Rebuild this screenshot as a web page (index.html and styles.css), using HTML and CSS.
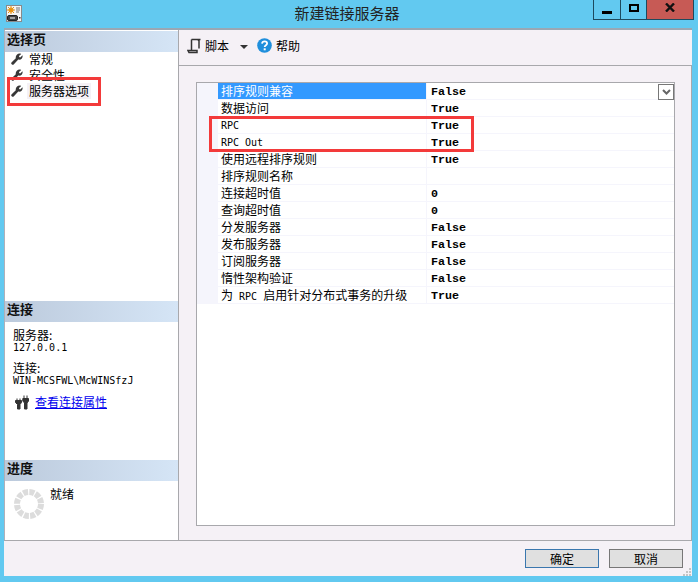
FILE: index.html
```html
<!DOCTYPE html>
<html lang="zh">
<head>
<meta charset="utf-8">
<title>新建链接服务器</title>
<link rel="stylesheet" href="styles.css">
</head>
<body>
<svg class="defs" width="0" height="0" aria-hidden="true">
  <symbol id="wrench" viewBox="0 0 12 12">
    <path d="M.7 11.300c-.8-.8-.6-1.500 0-2.100L4.800 5.300C4.300 2.800 6.300.3 9.200.6c.5.100.8.200 1 .4L8 3.100l.2 1 1 .3L11.500 2.200c.7 2.700-1.500 5.100-4.200 4.400L2.900 11.300c-.7.700-1.400.8-2.200 0z" fill="#383838"/>
  </symbol>
</svg>
<div class="window">
  <header class="titlebar">
    <div class="appicon">
      <svg width="16" height="17" viewBox="0 0 16 17">
        <rect x=".5" y=".5" width="15" height="16" fill="#f4f4f4" stroke="#8a8a8a"/>
        <circle cx="5" cy="5" r="2.500" fill="#f0a020"/>
        <path d="M5 1v8M1 5h8M2 2l6 6M8 2l-6 6" stroke="#e89010" stroke-width="1"/>
        <path d="M10 3h4M10 5h4M10 7h3" stroke="#777"/>
        <rect x="1.500" y="10.500" width="10" height="5" rx="1.500" fill="#444" stroke="#222"/>
        <path d="M4 13h5" stroke="#fff"/>
        <rect x="13" y="12" width="1.500" height="1.500" fill="#333"/>
      </svg>
    </div>
    <h1 class="title">新建链接服务器</h1>
    <div class="controls">
      <button class="ctl ctl-min" type="button" aria-label="最小化"><span class="glyph-min"></span></button>
      <button class="ctl ctl-max" type="button" aria-label="最大化"><span class="glyph-max"></span></button>
      <button class="ctl ctl-close" type="button" aria-label="关闭">
        <svg width="10" height="9" viewBox="0 0 10 9"><path d="M1 .5l8 8M9 .5l-8 8" stroke="#111" stroke-width="2.400"/></svg>
      </button>
    </div>
  </header>

  <div class="main">
    <div class="body">
      <aside class="side">
        <h2 class="side-head">选择页</h2>
        <ul class="pages">
          <li class="page"><svg class="ico"><use href="#wrench"/></svg><span>常规</span></li>
          <li class="page"><svg class="ico"><use href="#wrench"/></svg><span>安全性</span></li>
          <li class="page"><svg class="ico"><use href="#wrench"/></svg><span class="page-sel">服务器选项</span></li>
        </ul>
        <h2 class="side-head">连接</h2>
        <div class="conn">
          <div class="conn-label">服务器:</div>
          <div class="mono conn-value">127.0.0.1</div>
          <div class="conn-label conn-gap">连接:</div>
          <div class="mono conn-value">WIN-MCSFWL\McWINSfzJ</div>
          <div class="conn-link">
            <svg width="15" height="15" viewBox="0 0 15 15">
              <path d="M3 3.500v2M6 3.500v2M1.500 5.500h6v2L6 9.500V14H3.500V9.500L1.500 7.500z" fill="#333" stroke="#333" stroke-width="1"/>
              <path d="M10 .5v3M13 .5v3M8.800 3.500h5.700v2.500L13 8v6h-2.500V8L8.800 6z" fill="#333" stroke="#333" stroke-width="1"/>
            </svg>
            <a href="#">查看连接属性</a>
          </div>
        </div>
        <h2 class="side-head">进度</h2>
        <div class="progress">
          <svg width="32" height="32" viewBox="0 0 32 32">
            <circle cx="16" cy="16" r="12" fill="none" stroke="#dcdcdc" stroke-width="6" stroke-dasharray="5 1.283"/>
          </svg>
          <span class="progress-text">就绪</span>
        </div>
      </aside>

      <section class="content">
        <div class="toolbar">
          <svg class="tool-ico" width="15" height="16" viewBox="0 0 15 16">
            <path d="M4.500 1.500h9M4.500 1.500v11M11.500 1.500v1.500M12 1.500v9M1 12.500h9v2H2z" fill="none" stroke="#333" stroke-width="1.500"/>
          </svg>
          <span class="tool-text">脚本</span>
          <span class="caret"></span>
          <svg class="help-ico" width="15" height="15" viewBox="0 0 15 15">
            <circle cx="7.500" cy="7.500" r="7.300" fill="#1f8fdc"/>
            <path d="M5 5.600c.2-1.500 1.200-2.200 2.600-2.200 1.500 0 2.500.9 2.500 2 0 1.900-2.400 1.800-2.400 3.700" fill="none" stroke="#fff" stroke-width="1.800"/>
            <rect x="6.700" y="10.300" width="2" height="2" fill="#fff"/>
          </svg>
          <span class="tool-text">帮助</span>
        </div>
        <div class="panel">
          <div class="grid">
            <div class="row row-sel"><span class="name">排序规则兼容</span><span class="val">False</span><span class="drop"><svg width="9" height="6" viewBox="0 0 9 6"><path d="M1 1l3.500 3.500L8 1" fill="none" stroke="#666" stroke-width="2"/></svg></span></div>
            <div class="row"><span class="name">数据访问</span><span class="val">True</span></div>
            <div class="row"><span class="name mono">RPC</span><span class="val">True</span></div>
            <div class="row"><span class="name mono">RPC Out</span><span class="val">True</span></div>
            <div class="row"><span class="name">使用远程排序规则</span><span class="val">True</span></div>
            <div class="row"><span class="name">排序规则名称</span><span class="val"></span></div>
            <div class="row"><span class="name">连接超时值</span><span class="val">0</span></div>
            <div class="row"><span class="name">查询超时值</span><span class="val">0</span></div>
            <div class="row"><span class="name">分发服务器</span><span class="val">False</span></div>
            <div class="row"><span class="name">发布服务器</span><span class="val">False</span></div>
            <div class="row"><span class="name">订阅服务器</span><span class="val">False</span></div>
            <div class="row"><span class="name">惰性架构验证</span><span class="val">False</span></div>
            <div class="row"><span class="name">为<span class="mono"> RPC </span>启用针对分布式事务的升级</span><span class="val">True</span></div>
          </div>
        </div>
      </section>
    </div>
    <footer class="footer">
      <button class="btn btn-default" type="button">确定</button>
      <button class="btn" type="button">取消</button>
      <svg class="grip" width="9" height="9" viewBox="0 0 9 9"><path d="M7 1h2v2H7zM4 4h2v2H4zM7 4h2v2H7zM1 7h2v2H1zM4 7h2v2H4zM7 7h2v2H7z" fill="#c4c4c4"/></svg>
    </footer>
  </div>
  <div class="mark mark-side"></div>
  <div class="mark mark-rows"></div>
</div>
</body>
</html>
```
FILE: styles.css
```css
* { box-sizing: border-box; }
html, body { margin: 0; padding: 0; }
body {
  width: 698px;
  height: 582px;
  overflow: hidden;
  font-family: "Noto Sans CJK SC", "Liberation Sans", sans-serif;
  font-size: 12px;
  line-height: 16px;
  color: #000;
}
.defs { position: absolute; }
.mono { font-family: "DejaVu Sans Mono", "Noto Sans CJK SC", monospace; font-size: 10px; }

.window {
  position: relative;
  width: 698px;
  height: 582px;
  background: #62c9f0;
  display: flex;
  flex-direction: column;
  padding: 0 6px 6px 4px;
}

.titlebar {
  height: 28px;
  flex: none;
  display: grid;
  grid-template-columns: 1fr auto 1fr;
  align-items: start;
}
.appicon { padding: 5px 0 0 2px; height: 22px; }
.appicon svg { display: block; }
.title {
  margin: 3px 0 0;
  font-size: 15px;
  font-weight: 400;
  line-height: 20px;
  color: #222;
  padding-right: 2px;
}
.controls {
  justify-self: end;
  margin-right: -2px;
  display: flex;
  height: 20px;
  border: 1px solid #1d4a5e;
  border-top: 0;
}
.ctl {
  margin: 0;
  padding: 0;
  border: 0;
  background: none;
  display: flex;
  align-items: center;
  justify-content: center;
}
.ctl-min { width: 27px; border-right: 1px solid #1d4a5e; }
.ctl-max { width: 26px; border-right: 1px solid #1d4a5e; }
.ctl-close { width: 46px; background: #c75a55; }
.glyph-min { display: block; width: 10px; height: 3px; background: #000; margin-top: 6px; }
.glyph-max { display: block; width: 10px; height: 8px; border: 2px solid #000; margin-top: -4px; }
.ctl-close svg { margin-top: -4px; }

.main {
  flex: 1;
  display: flex;
  flex-direction: column;
  background: #f5f1f6;
  border-top: 2px solid #9aa7b3;
  min-height: 0;
}
.body {
  flex: 1;
  display: flex;
  min-height: 0;
  border-bottom: 1px solid #a8a8ac;
}

.side {
  width: 175px;
  flex: none;
  background: #fff;
  border-left: 1px solid #b0b0b8;
  border-right: 1px solid #a8a8ac;
  display: flex;
  flex-direction: column;
  padding-top: 1px;
}
.side-head {
  margin: 0;
  height: 21px;
  flex: none;
  padding: 0 0 0 2px;
  font-size: 13px;
  font-weight: 700;
  line-height: 16px;
  color: #111;
  background: linear-gradient(90deg, #bccadc, #d5e5f6);
}
.pages {
  list-style: none;
  margin: -1px 0 0;
  padding: 0;
  height: 250px;
  flex: none;
}
.page {
  height: 16px;
  display: flex;
  align-items: center;
  padding-left: 6px;
  gap: 6px;
}
.ico { width: 12px; height: 12px; flex: none; }
.page-sel { background: #f5f1f6; padding: 0 2px; margin-left: -2px; }

.conn { height: 138px; flex: none; padding: 7px 0 0 8px; }
.conn-label { height: 13px; line-height: 12px; }
.conn-value { height: 11px; line-height: 11px; }
.conn-gap { margin-top: 9px; }
.conn-link { display: flex; align-items: center; gap: 6px; margin-top: 8px; margin-left: 1px; }
.conn-link a { color: #0000ee; text-decoration: underline; }

.progress { flex: 1; display: flex; align-items: flex-start; padding: 7px 0 0 8px; gap: 5px; }
.progress-text { margin-top: -2px; }

.content { flex: 1; display: flex; flex-direction: column; min-width: 0; }
.toolbar {
  height: 36px;
  flex: none;
  display: flex;
  align-items: center;
  padding: 0 0 4px 8px;
  border-bottom: 1px solid #a8a8ac;
}
.tool-ico { margin-right: 3px; }
.tool-text { line-height: 16px; }
.caret {
  width: 0;
  height: 0;
  margin: 2px 9px 0 11px;
  border-left: 4px solid transparent;
  border-right: 4px solid transparent;
  border-top: 4px solid #333;
}
.help-ico { margin-right: 4px; }

.panel {
  flex: 1;
  padding: 16px 16px 14px 17px;
  border-right: 1px solid #a8a8ac;
  min-height: 0;
}
.grid {
  height: 100%;
  background: #fff;
  border: 1px solid #a8a8ac;
  position: relative;
}
.row {
  height: 17px;
  display: grid;
  grid-template-columns: 21px 209px 1fr;
  align-items: center;
  border-bottom: 1px solid #f5f5fc;
  position: relative;
}
.row::before { content: ""; grid-column: 1; grid-row: 1; align-self: stretch; background: #f5f5fc; margin-bottom: -1px; }
.name { grid-column: 2; padding-left: 3px; height: 16px; line-height: 16px; border-right: 1px solid #f5f5fc; white-space: pre; }
.name.mono { font-size: 10px; line-height: 18px; }
.val {
  grid-column: 3;
  padding-left: 4px;
  font-family: "Liberation Mono", monospace;
  font-size: 11.67px;
  font-weight: 700;
  height: 16px;
  line-height: 18px;
}
.row-sel .name { background: #3399ff; color: #fff; }
.drop {
  position: absolute;
  right: 0;
  top: 1px;
  width: 16px;
  height: 16px;
  border: 1px solid #777;
  background: #fff;
  display: flex;
  align-items: center;
  justify-content: center;
}

.footer {
  height: 35px;
  flex: none;
  display: flex;
  justify-content: flex-end;
  align-items: flex-start;
  gap: 10px;
  padding: 8px 9px 0 0;
  position: relative;
}
.btn {
  width: 74px;
  height: 19px;
  margin: 0;
  padding: 0;
  background: #e0e0e0;
  border: 1px solid #777;
  font: 12px/16px "Noto Sans CJK SC", sans-serif;
  color: #000;
}
.btn-default { border-color: #3a77ae; }
.grip { position: absolute; right: 1px; bottom: 0; }

.mark { position: absolute; border: 3px solid #f33a3a; pointer-events: none; }
.mark-side { left: 7px; top: 77px; width: 94px; height: 29px; }
.mark-rows { left: 209px; top: 116px; width: 265px; height: 36px; }
```
